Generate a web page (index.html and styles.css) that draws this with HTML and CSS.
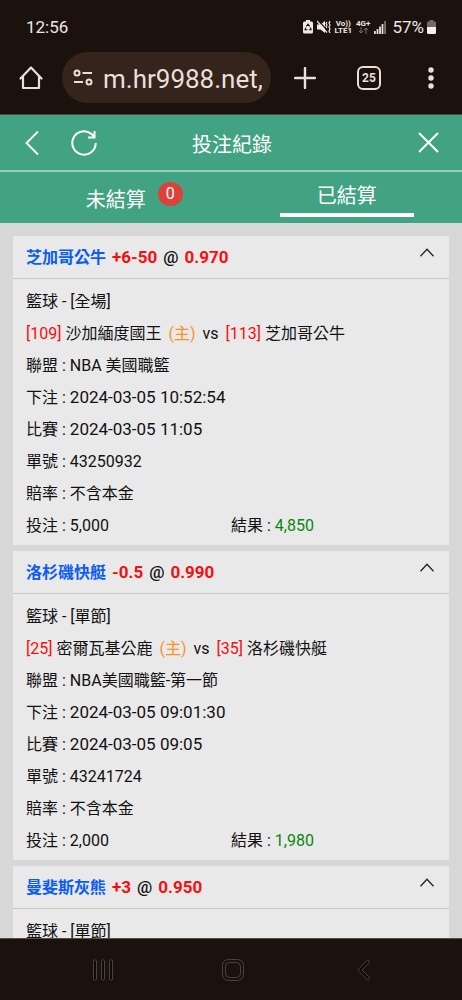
FILE: index.html
```
<!DOCTYPE html>
<html lang="zh-Hant">
<head>
<meta charset="utf-8">
<meta name="viewport" content="width=device-width, initial-scale=1">
<title>投注紀錄</title>
<link rel="stylesheet" href="styles.css">
</head>
<body>
<div class="phone">
  <div class="status">
    <time class="clock">12:56</time>
    <div class="status-icons">
      <svg width="10" height="14" viewBox="0 0 10 14"><path d="M3 0h4v1.500h1.500q1.500 0 1.500 1.500v9q0 1.500-1.500 1.500h-7q-1.500 0-1.500-1.500v-9q0-1.500 1.500-1.500h1.500z" fill="#efe9e6"/><path d="M3.300 6.400 5 4.200l1.700 2.200M7.300 7.500l.8 2.200H6M4.500 9.800H2l.8-2.200" fill="none" stroke="#1b120d" stroke-width="1.100"/></svg>
      <svg width="14" height="14" viewBox="0 0 14 14"><path d="M0 4.500h3.500L8 1v12L3.500 9.500H0z" fill="#efe9e6"/><path d="M1 0 12 12.500" stroke="#1b120d" stroke-width="1.200"/><path d="M0 1 10 12.500" stroke="#efe9e6" stroke-width="1.200"/><path d="m10 2-1 1.500 1 1.500-1 1.500 1 1.500M13 1l-1 2 1 2-1 2 1 2-1 2 1 2" fill="none" stroke="#efe9e6" stroke-width="1.200"/></svg>
      <span class="carrier"><span>Vo))</span><span>LTE1</span></span>
      <span class="carrier"><span>4G+</span><svg width="11" height="7" viewBox="0 0 11 7"><path d="M3 0v6M.8 3.800 3 6l2.200-2.200M8 7V1M5.800 3.200 8 1l2.200 2.200" fill="none" stroke="#776e69" stroke-width="1"/></svg></span>
      <svg class="signal" width="12" height="13" viewBox="0 0 12 13"><path d="M0 10h1.800v3H0zM2.600 8h1.800v5H2.600zM5.100 5.500h1.800V13H5.100zM7.600 3h1.800v10H7.600z" fill="#e6dfdb"/><path d="M10.100 0H12v13h-1.900z" fill="#776e69"/></svg>
      <span class="percent">57%</span>
      <svg width="9" height="14" viewBox="0 0 9 14"><path d="M2.500 0h4v1.500H8q1 0 1 1V7H0V2.500q0-1 1-1h1.500z" fill="#72686a"/><path d="M0 7h9v5.500q0 1.500-1.500 1.500h-6Q0 14 0 12.500z" fill="#f4efec"/></svg>
    </div>
  </div>

  <div class="browser">
    <button class="icon-button" type="button" aria-label="首頁"><svg width="24" height="24" viewBox="0 0 24 24"><path d="M1.500 12.500 12 1.500 22.500 12.500M4 10.500V22h16V10.500" fill="none" stroke="#eadfd9" stroke-width="2.200" stroke-linejoin="round" stroke-linecap="round"/></svg></button>
    <div class="address">
      <svg width="20" height="18" viewBox="0 0 20 18"><g fill="none" stroke="#eadfd9" stroke-width="2"><circle cx="4" cy="4" r="2.500"/><path d="M9.500 4H19M1 13h9"/><circle cx="16" cy="13" r="2.500"/></g></svg>
      <input class="url" type="text" aria-label="網址" value="m.hr9988.net,">
    </div>
    <button class="icon-button" type="button" aria-label="新分頁"><svg width="22" height="22" viewBox="0 0 22 22"><path d="M11 1v20M1 11h20" stroke="#eadfd9" stroke-width="2.400" stroke-linecap="round"/></svg></button>
    <button class="tab-count" type="button" aria-label="25 個分頁">25</button>
    <button class="icon-button" type="button" aria-label="選單"><svg width="6" height="22" viewBox="0 0 6 22" fill="#eadfd9"><circle cx="3" cy="3" r="2.700"/><circle cx="3" cy="11" r="2.700"/><circle cx="3" cy="19" r="2.700"/></svg></button>
  </div>

  <header class="header">
    <div class="header-side">
      <button class="icon-button" type="button" aria-label="返回"><svg width="14" height="26" viewBox="0 0 14 26"><path d="M13 1.500 1.500 13 13 24.500" fill="none" stroke="#fff" stroke-width="1.800"/></svg></button>
      <button class="icon-button" type="button" aria-label="重新整理"><svg width="26" height="26" viewBox="0 0 26 26"><path d="M24.700 13A11.700 11.700 0 1 1 20.500 4L23.500 7M23.500 1v6.500H17" fill="none" stroke="#fff" stroke-width="2"/></svg></button>
    </div>
    <h1 class="title">投注紀錄</h1>
    <div class="header-side header-end">
      <button class="icon-button" type="button" aria-label="關閉"><svg width="21" height="21" viewBox="0 0 21 21"><path d="m1 1 19 19M20 1 1 20" stroke="#fff" stroke-width="2"/></svg></button>
    </div>
  </header>

  <nav class="tabs">
    <button class="tab" type="button">未結算<span class="badge">0</span></button>
    <button class="tab active" type="button">已結算</button>
  </nav>

  <main class="list">
    <article class="card">
      <div class="card-head">
        <h2 class="pick"><span class="team">芝加哥公牛</span><span class="red">+6-50</span><span class="at">@</span><span class="red">0.970</span></h2>
        <button class="icon-button toggle" type="button" aria-label="收合"><svg width="14" height="9" viewBox="0 0 14 9"><path d="m.5 8.200 6.500-7 6.500 7" fill="none" stroke="#222" stroke-width="1.300"/></svg></button>
      </div>
      <div class="card-body">
        <p>籃球 - [全場]</p>
        <p class="match"><span><span class="red">[109]</span> 沙加緬度國王</span><span class="home">(主)</span><span>vs</span><span><span class="red">[113]</span> 芝加哥公牛</span></p>
        <p>聯盟 : NBA 美國職籃</p>
        <p>下注 : <time class="date">2024-03-05 10:52:54</time></p>
        <p>比賽 : <time class="date">2024-03-05 11:05</time></p>
        <p>單號 : 43250932</p>
        <p>賠率 : 不含本金</p>
        <p class="split"><span>投注 : 5,000</span><span>結果 : <span class="green">4,850</span></span></p>
      </div>
    </article>

    <article class="card">
      <div class="card-head">
        <h2 class="pick"><span class="team">洛杉磯快艇</span><span class="red">-0.5</span><span class="at">@</span><span class="red">0.990</span></h2>
        <button class="icon-button toggle" type="button" aria-label="收合"><svg width="14" height="9" viewBox="0 0 14 9"><path d="m.5 8.200 6.500-7 6.500 7" fill="none" stroke="#222" stroke-width="1.300"/></svg></button>
      </div>
      <div class="card-body">
        <p>籃球 - [單節]</p>
        <p class="match"><span><span class="red">[25]</span> 密爾瓦基公鹿</span><span class="home">(主)</span><span>vs</span><span><span class="red">[35]</span> 洛杉磯快艇</span></p>
        <p>聯盟 : NBA美國職籃-第一節</p>
        <p>下注 : <time class="date">2024-03-05 09:01:30</time></p>
        <p>比賽 : <time class="date">2024-03-05 09:05</time></p>
        <p>單號 : 43241724</p>
        <p>賠率 : 不含本金</p>
        <p class="split"><span>投注 : 2,000</span><span>結果 : <span class="green">1,980</span></span></p>
      </div>
    </article>

    <article class="card">
      <div class="card-head">
        <h2 class="pick"><span class="team">曼斐斯灰熊</span><span class="red">+3</span><span class="at">@</span><span class="red">0.950</span></h2>
        <button class="icon-button toggle" type="button" aria-label="收合"><svg width="14" height="9" viewBox="0 0 14 9"><path d="m.5 8.200 6.500-7 6.500 7" fill="none" stroke="#222" stroke-width="1.300"/></svg></button>
      </div>
      <div class="card-body">
        <p>籃球 - [單節]</p>
      </div>
    </article>
  </main>

  <div class="system-nav">
    <button class="icon-button" type="button" aria-label="最近使用"><svg width="20" height="22" viewBox="0 0 20 22"><g fill="#0f0a07" stroke="#4a423d" stroke-width="1"><rect x=".5" y="1" width="3" height="20" rx="1"/><rect x="8.500" y="1" width="3" height="20" rx="1"/><rect x="16.500" y="1" width="3" height="20" rx="1"/></g></svg></button>
    <button class="icon-button" type="button" aria-label="主畫面"><svg width="22" height="22" viewBox="0 0 22 22"><g fill="none" stroke="#4a423d" stroke-width="1"><rect x=".5" y=".5" width="21" height="21" rx="6"/><rect x="3.500" y="3.500" width="15" height="15" rx="4"/></g></svg></button>
    <button class="icon-button" type="button" aria-label="上一頁"><svg width="13" height="22" viewBox="0 0 13 22"><path d="M10.500 1 .8 11l9.700 10q2 0 2-2.500L5 11l7.500-7.500Q12.500 1 10.500 1z" fill="#0f0a07" stroke="#4a423d" stroke-width="1"/></svg></button>
  </div>
</div>
</body>
</html>
```

FILE: styles.css
```
* {
  box-sizing: border-box;
}

body {
  margin: 0;
  background: #1b120d;
  font-family: Roboto, "Noto Sans CJK TC", sans-serif;
  font-size: 16px;
  color: #111;
}

h1,
h2,
p {
  margin: 0;
}

button,
input {
  padding: 0;
  border: 0;
  background: none;
  color: inherit;
  font: inherit;
}

svg {
  display: block;
  flex: none;
}

.phone {
  display: flex;
  flex-direction: column;
  height: 100vh;
  overflow: hidden;
}

.icon-button {
  display: flex;
  align-items: center;
  justify-content: center;
}

/* Status bar */
.status {
  display: flex;
  align-items: center;
  justify-content: space-between;
  height: 54px;
  flex: none;
  padding: 0 26px 0 26px;
  color: #eee7e3;
}

.clock,
.percent {
  font-size: 17px;
}

.status-icons {
  display: flex;
  align-items: center;
  gap: 4px;
}

.carrier {
  display: flex;
  flex-direction: column;
  align-items: center;
  font-size: 8px;
  font-weight: 700;
  line-height: 7px;
}

.percent {
  margin: 0 -1px 0 2px;
}

/* Browser toolbar */
.browser {
  display: flex;
  align-items: center;
  height: 61px;
  flex: none;
  padding: 0 28px 13px 19px;
  border-bottom: 1px solid #54463f;
  color: #eadfd9;
}

.address {
  display: flex;
  flex: 1;
  align-items: center;
  gap: 10px;
  min-width: 0;
  height: 51px;
  margin: 0 23px 0 19px;
  padding: 0 9px 0 11px;
  border-radius: 26px;
  background: #35241c;
}

.url {
  flex: 1;
  min-width: 0;
  height: 38px;
  padding-top: 2px;
  font-size: 26px;
}

.tab-count {
  width: 24px;
  height: 24px;
  margin: 0 47px 0 41px;
  border: 2px solid #eadfd9;
  border-radius: 6px;
  font-size: 12px;
  font-weight: 700;
  line-height: 20px;
}

/* Page header */
.header {
  display: flex;
  align-items: center;
  height: 57px;
  flex: none;
  padding: 0 23px 0 25px;
  border-bottom: 2px solid #9dcdb9;
  background: #41a381;
  color: #fff;
}

.header-side {
  display: flex;
  flex: 1;
  gap: 32px;
}

.header-end {
  justify-content: flex-end;
}

.title {
  padding-top: 4px;
  font-size: 20px;
  font-weight: 400;
  line-height: 28px;
}

.tabs {
  display: flex;
  height: 51px;
  flex: none;
  background: #41a381;
  color: #fff;
}

.tab {
  position: relative;
  flex: 1;
  padding-top: 4px;
  font-size: 20px;
  line-height: 28px;
}

.active {
  flex: none;
  width: 29%;
  height: 45px;
  margin: 0 calc(10% + 2px) 0 calc(10% + 2px);
  padding: 6px 0 0;
  border-bottom: 4px solid #fff;
}

.badge {
  position: absolute;
  top: 10px;
  left: calc(50% + 42px);
  width: 25px;
  height: 24px;
  border-radius: 50%;
  background: #dc413c;
  font-size: 16px;
  line-height: 24px;
}

/* Bet list */
.list {
  display: flex;
  flex: 1;
  flex-direction: column;
  gap: 6px;
  min-height: 0;
  overflow: hidden;
  padding: 13px 13px 0;
  background: #d7d7d7;
}

.card {
  flex: none;
  background: #e9e9e9;
}

.card-head {
  display: flex;
  align-items: center;
  justify-content: space-between;
  height: 43px;
  padding: 0 15px 0 13px;
  border-bottom: 1px solid #c7c7c7;
}

.pick {
  display: flex;
  align-items: baseline;
  gap: 6px;
  font-size: 17px;
  font-weight: 700;
  line-height: 24px;
}

.team {
  font-size: 16px;
  color: #0a5cf5;
}

.at {
  font-weight: 500;
}

.toggle {
  padding-bottom: 9px;
}

.card-body {
  padding: 7px 13px 3px;
  line-height: 32px;
}

.match {
  display: flex;
  gap: 7px;
}

.date {
  font-size: 17px;
  line-height: 24px;
}

.split {
  display: grid;
  grid-template-columns: 1fr 1fr;
}

.red {
  color: #f90d10;
}

.home {
  color: #f7931e;
}

.green {
  color: #0a870d;
}

/* System navigation */
.system-nav {
  display: grid;
  grid-template-columns: repeat(3, 130px);
  justify-content: center;
  height: 62px;
  flex: none;
  padding-left: 4px;
  border-top: 1px solid #54504c;
  background: #1b120d;
}
```
